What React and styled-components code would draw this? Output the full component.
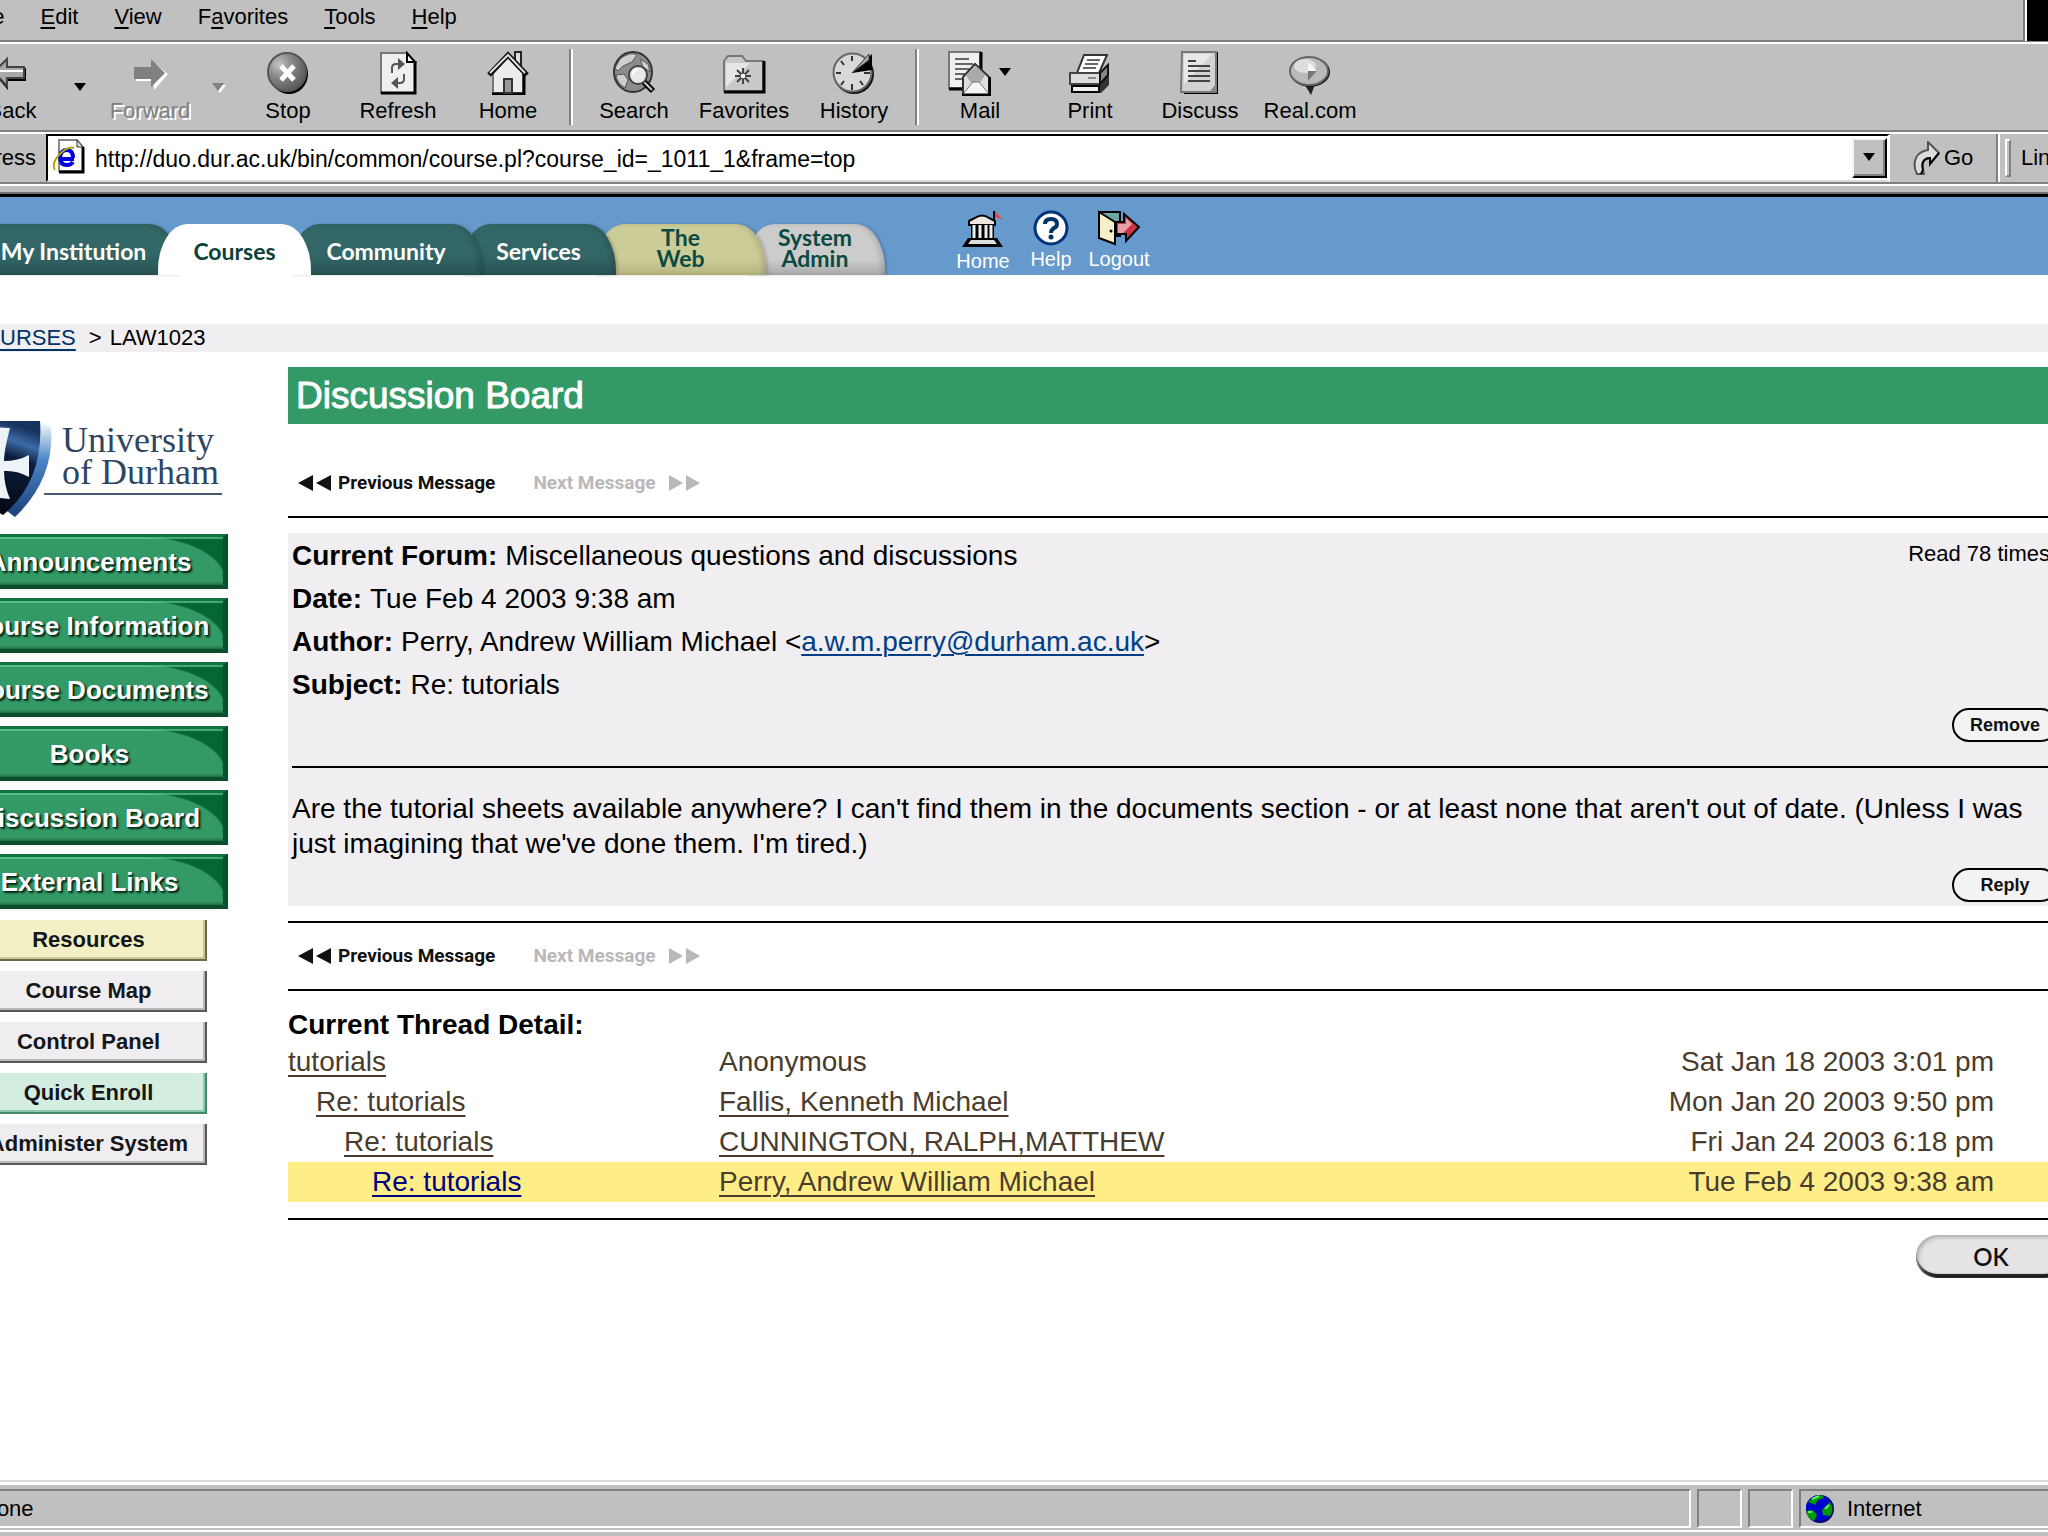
import React from "react";
import styled, { createGlobalStyle, css } from "styled-components";

const sans = `"Liberation Sans", Arial, sans-serif`;
const compact = `Roboto, "Liberation Sans", sans-serif`;
const round = `Lato, "Liberation Sans", sans-serif`;

const GlobalStyle = createGlobalStyle`
  *, *::before, *::after { box-sizing: border-box; }
  html, body { margin: 0; padding: 0; background: #fff; }
  body { font-family: ${sans}; color: #000; overflow-x: hidden; }
  button, input { font: inherit; color: inherit; margin: 0; padding: 0; border: 0; background: none; border-radius: 0; }
  button { cursor: pointer; }
  svg { display: block; flex: none; }
`;

const Browser = styled.div`
  display: flex;
  flex-direction: column;
  min-height: 100vh;
  overflow: hidden;
`;

/* ---------- browser chrome ---------- */

const Chrome = styled.header`
  background: #c0c0c0;
  font-size: 22px;
  line-height: 26px;
  border-bottom: 3px solid #000;
  box-shadow: inset 0 -2px 0 #757075;
`;

const MenuRow = styled.div`
  display: flex;
  height: 44px;
  border-bottom: 2px solid #fff;
  box-shadow: inset 0 -2px 0 #808080;
`;

const Menu = styled.nav`
  display: flex;
  flex: 1;
  gap: 36px;
  margin-left: -31px;
  padding-top: 4px;
  border-right: 2px solid #808080;
`;

const MenuItem = styled.button`
  display: block;
  height: 26px;
  u { text-underline-offset: 3px; text-decoration-thickness: 2px; }
`;

const Throbber = styled.div`
  width: 23px;
  height: 41px;
  background: #000;
  border-left: 2px solid #fff;
`;

const Toolbar = styled.div`
  display: flex;
  align-items: stretch;
  height: 90px;
  margin-left: -43px;
  border-bottom: 2px solid #fff;
  box-shadow: inset 0 -2px 0 #808080;
`;

const ToolButton = styled.button`
  display: flex;
  flex-direction: column;
  align-items: center;
  gap: 3px;
  width: 110px;
  padding-top: 7px;
  flex: none;
  ${(p) => p.$off && css`color: #808080; text-shadow: 2px 2px 0 #fff;`}
`;

const ToolIcon = styled.span`
  display: flex;
  align-items: center;
  gap: 8px;
  height: 44px;
`;

const ArrowButton = styled.button`
  display: flex;
  align-items: center;
  justify-content: center;
  width: 28px;
  flex: none;
`;

const Separator = styled.div`
  width: 4px;
  margin: 5px 6px 7px;
  border-left: 2px solid #808080;
  border-right: 2px solid #fff;
`;

const AddressRow = styled.div`
  display: flex;
  height: 48px;
`;

const AddressLabel = styled.label`
  display: flex;
  justify-content: flex-end;
  align-items: center;
  width: 46px;
  padding-right: 10px;
  flex: none;
`;

const Combo = styled.div`
  display: flex;
  align-items: stretch;
  flex: 1;
  gap: 9px;
  padding: 2px 0 2px 4px;
  background: #fff;
  border: 2px solid #000;
  border-right: 3px solid #fff;
  border-bottom-color: #dcdcdc;
`;

const AddressInput = styled.input`
  flex: 1;
  min-width: 0;
  padding-top: 2px;
  outline: 0;
  font-size: 23px;
`;

const ComboArrow = styled.button`
  display: flex;
  align-items: center;
  justify-content: center;
  width: 35px;
  background: #c0c0c0;
  border: 2px solid #f4f4f4;
  border-right-color: #000;
  border-bottom-color: #000;
  box-shadow: inset -2px -2px 0 #808080;
`;

const GoButton = styled.button`
  display: flex;
  align-items: center;
  gap: 4px;
  width: 108px;
  padding-left: 22px;
  border-right: 2px solid #808080;
`;

const LinksBar = styled.div`
  display: flex;
  align-items: center;
  gap: 10px;
  width: 50px;
  padding-left: 5px;
  border-left: 2px solid #fff;
  overflow: hidden;
`;

const Grip = styled.span`
  width: 6px;
  height: 38px;
  flex: none;
  background: #c0c0c0;
  border: 2px solid #fff;
  border-right-color: #808080;
  border-bottom-color: #808080;
`;

const ChromeFoot = styled.div`
  height: 12px;
  border-top: 2px solid #808080;
  box-shadow: inset 0 2px 0 #fff;
`;

/* ---------- site header ---------- */

const SiteHeader = styled.div`
  display: flex;
  align-items: flex-end;
  height: 78px;
  background: #6699cc;
`;

const Tabs = styled.nav`
  display: flex;
  margin-left: -32px;
  isolation: isolate;
`;

const tones = {
  teal: css`background: linear-gradient(#336666 60%, #285353); color: #fff;`,
  white: css`background: #fff; color: #0b4238;`,
  khaki: css`background: linear-gradient(#cccc99 70%, #b4b47e); color: #0b4a42;`,
  grey: css`background: linear-gradient(#cccccc 70%, #aaaaaa); color: #0b4a42;`,
};

const Tab = styled.a`
  position: relative;
  z-index: ${(p) => p.$level};
  display: flex;
  align-items: center;
  justify-content: center;
  width: ${(p) => p.$width}px;
  height: 51px;
  margin-right: -21px;
  padding-top: 4px;
  border-radius: 29px 29px 0 0 / 46px 46px 0 0;
  font: 700 23px/21px ${round};
  text-align: center;
  text-decoration: none;
  white-space: pre-line;
  ${(p) => tones[p.$tone]}
  ${(p) => p.$tone !== "white" && css`box-shadow: inset -4px 0 4px rgba(0, 0, 0, 0.12), 2px 0 3px rgba(0, 0, 0, 0.18);`}
  ${(p) => p.$double && css`padding: 0 0 3px;`}
`;

const QuickLinks = styled.nav`
  display: flex;
  align-self: stretch;
  margin-left: 85px;
`;

const QuickLink = styled.a`
  display: flex;
  flex-direction: column;
  align-items: center;
  gap: 1px;
  width: 68px;
  padding-top: 13px;
  color: #fff;
  font-size: 20px;
  line-height: 24px;
  text-decoration: none;
`;

const Crumbs = styled.nav`
  display: flex;
  gap: 8px;
  height: 28px;
  margin: 49px 0 0 -33px;
  padding-top: 1px;
  background: #f0eef0;
  font-size: 22px;
  line-height: 26px;
  a { color: #003366; margin-right: 5px; text-underline-offset: 4px; text-decoration-thickness: 2px; }
`;

/* ---------- body ---------- */

const Body = styled.div`
  display: flex;
  gap: 60px;
  margin: 0 -20px 0 -49px;
`;

const Sidebar = styled.aside`
  display: flex;
  flex-direction: column;
  align-items: center;
  width: 277px;
  flex: none;
  padding-top: 67px;
`;

const Logo = styled.div`
  display: flex;
  align-self: flex-end;
  width: 228px;
  margin-bottom: 17px;
`;

const LogoText = styled.div`
  width: 178px;
  height: 76px;
  margin-left: -12px;
  padding: 5px 0 0 18px;
  border-bottom: 2px solid #4a5a70;
  color: #2e4562;
  font: 36px/32px "Liberation Serif", "Times New Roman", serif;
  white-space: nowrap;
`;

const SideList = styled.nav`
  display: flex;
  flex-direction: column;
  gap: ${(p) => p.$gap}px;
  width: ${(p) => p.$width}px;
  margin-bottom: 11px;
`;

const CourseButton = styled.a`
  display: flex;
  align-items: center;
  justify-content: center;
  height: 55px;
  padding-top: 2px;
  background:
    radial-gradient(80px 46px at 0 46px, #339966 97%, #066634 100%) right top / 76px 100% no-repeat,
    #339966;
  border: solid;
  border-width: 3px 5px 4px 5px;
  border-color: #1a7044 #06502c #08502c #1f7a4b;
  box-shadow: inset 0 2px 0 rgba(102, 221, 153, 0.6), inset 0 -2px 2px rgba(0, 50, 25, 0.35);
  color: #fff;
  font-size: 26px;
  font-weight: 700;
  line-height: 30px;
  text-decoration: none;
  text-shadow: 2px 2px 2px #0a2c18, 1px 1px 1px #0a2c18;
  white-space: nowrap;
`;

const faces = {
  cream: ["#f2f0c4", "#6d6c45", "#c9c795"],
  grey: ["#efedf0", "#59575b", "#b9b7bb"],
  mint: ["#d3eee0", "#3f8a68", "#8cc8ab"],
};

const ToolLink = styled.a`
  display: flex;
  align-items: center;
  justify-content: center;
  height: 41px;
  background: ${(p) => faces[p.$face][0]};
  border-right: 2px solid ${(p) => faces[p.$face][1]};
  border-bottom: 2px solid ${(p) => faces[p.$face][1]};
  box-shadow: inset -2px -2px 0 ${(p) => faces[p.$face][2]};
  color: #14161a;
  font-size: 22px;
  font-weight: 700;
  line-height: 26px;
  text-decoration: none;
  white-space: nowrap;
`;

const Main = styled.main`
  flex: 1;
  min-width: 0;
  padding-top: 15px;
  font-size: 28px;
  line-height: 35px;
`;

const Title = styled.h1`
  margin: 0 0 26px;
  padding-left: 8px;
  background: #339966;
  color: #fff;
  font-size: 37px;
  font-weight: 400;
  line-height: 57px;
  -webkit-text-stroke: 1px #fff;
`;

const Rule = styled.hr`
  height: 2px;
  margin: 0;
  border: 0;
  background: #000;
`;

const Pager = styled.div`
  display: flex;
  align-items: center;
  gap: 38px;
  height: 66px;
  padding-left: 10px;
`;

const PagerButton = styled.button`
  display: flex;
  align-items: center;
  gap: ${(p) => (p.disabled ? 12 : 6)}px;
  color: ${(p) => (p.disabled ? "#b9b7ba" : "#111")};
  font: 700 19px/24px ${compact};
`;

const Post = styled.article`
  margin: 15px 0;
  padding: 1px 10px 4px 4px;
  background: #f0eef0;
`;

const PostHead = styled.div`
  display: flex;
  justify-content: space-between;
`;

const Facts = styled.dl`
  margin: 0;
  line-height: 43px;
`;

const Fact = styled.div`
  display: flex;
  gap: 8px;
  dt { font-weight: 700; }
  dd { margin: 0; }
  a { color: #003f87; text-underline-offset: 3px; text-decoration-thickness: 2px; }
`;

const ReadCount = styled.span`
  padding-right: 8px;
  font-size: 22px;
  line-height: 40px;
  white-space: nowrap;
`;

const Actions = styled.div`
  display: flex;
  justify-content: flex-end;
  padding: ${(p) => (p.$loose ? "2px 0 24px" : "7px 0 0")};
`;

const PillButton = styled.button`
  width: 106px;
  height: 34px;
  border: 2px solid #000;
  border-radius: 17px;
  background: #f4f3f4;
  color: #111;
  font-size: 18px;
  font-weight: 700;
  line-height: 28px;
`;

const Message = styled.p`
  max-width: 1740px;
  margin: 0;
  padding-top: 23px;
`;

const ThreadTitle = styled.h2`
  margin: 0;
  padding-top: 16px;
  font-size: 28px;
  line-height: 35px;
`;

const Thread = styled.table`
  width: 100%;
  margin-bottom: 16px;
  border-collapse: collapse;
  color: #4a3c2c;
  line-height: 40px;
  td { padding: 0; }
  a { color: inherit; text-underline-offset: 4px; text-decoration-thickness: 2px; }
`;

const ThreadRow = styled.tr`
  height: 40px;
  background: ${(p) => (p.$current ? "#ffee88" : "transparent")};
`;

const TopicCell = styled.td`
  width: 431px;
  a { margin-left: ${(p) => p.$depth * 28}px; color: ${(p) => (p.$current ? "#000080" : "inherit")}; }
`;

const DateCell = styled.td`
  text-align: right;
  && { padding-right: 74px; }
`;

const OkRow = styled.div`
  display: flex;
  justify-content: flex-end;
  padding: 15px 2px 40px 0;
`;

const OkButton = styled.button`
  width: 150px;
  height: 43px;
  border-radius: 22px;
  background: #e6e3e7;
  box-shadow: inset 2px 2px 4px #aaa8ac, inset 0 -4px 1px #1a1a1a;
  color: #111;
  font: 600 24px/38px ${round};
`;

/* ---------- status bar ---------- */

const StatusBar = styled.footer`
  display: flex;
  gap: 6px;
  height: 56px;
  margin-top: auto;
  padding: 4px 0 4px;
  background: #c0c0c0;
  border-top: 2px solid #dcdcdc;
  box-shadow: inset 0 3px 0 #fff, inset 0 -4px 0 #c0c0c0, inset 0 -6px 0 #fff;
  font-size: 22px;
  line-height: 26px;
`;

const StatusCell = styled.div`
  display: flex;
  align-items: center;
  gap: 12px;
  height: 39px;
  margin-top: 3px;
  ${(p) => (p.$width ? css`width: ${p.$width}px; flex: none;` : css`flex: 1; margin-left: -25px;`)}
  padding-left: 4px;
  border: 2px solid #fff;
  border-top-color: #808080;
  border-left-color: #808080;
  ${(p) => p.$open && css`border-right: 0;`}
`;

/* ---------- drawings ---------- */

const Down = ({ off, size = 12 }) => (
  <svg width={size + 2} height="10" viewBox="0 0 14 10" aria-hidden="true">
    {off && <path d="M2 2h12l-6 8z" fill="#fff" />}
    <path d="M0 0h12l-6 8z" fill={off ? "#808080" : "#000"} />
  </svg>
);

const BackIcon = () => (
  <svg width="40" height="44" viewBox="0 0 40 44">
    <path d="M2 23 16 8v9h18v13H16v9z" fill="#000" />
    <path d="M2 21 15 8v8h17v11H15v8z" fill="#a8a8a8" stroke="#444" strokeWidth="2" />
    <path d="M7 20h24" stroke="#fff" strokeWidth="2" />
  </svg>
);
const ForwardIcon = () => (
  <svg width="36" height="44" viewBox="0 0 36 44">
    <path d="M4 18h16V10l16 13-14 16v-9H4z" fill="#fff" />
    <path d="M2 16h17V8l14 14-14 14v-8H2z" fill="#808080" />
  </svg>
);
const StopIcon = () => (
  <svg width="42" height="44" viewBox="0 0 42 44">
    <defs>
      <radialGradient id="stop" cx=".3" cy=".3" r=".8">
        <stop offset="0" stopColor="#c4c4c4" /><stop offset=".45" stopColor="#858585" /><stop offset="1" stopColor="#555" />
      </radialGradient>
    </defs>
    <ellipse cx="22" cy="23" rx="19" ry="20" fill="#000" />
    <ellipse cx="20" cy="21" rx="19" ry="19" fill="url(#stop)" stroke="#555" strokeWidth="2" />
    <path d="M14 15l13 14M27 15 14 29" stroke="#fff" strokeWidth="5" />
  </svg>
);
const RefreshIcon = () => (
  <svg width="38" height="44" viewBox="0 0 38 44">
    <path d="M2 2h26l8 9v31H2z" fill="#efefef" stroke="#777" strokeWidth="2" />
    <path d="M36 10v32H2" fill="none" stroke="#000" strokeWidth="3" />
    <path d="M28 2v9h8z" fill="#fff" stroke="#000" strokeWidth="2" />
    <path d="M13 22v-5q0-4 4-4h3" fill="none" stroke="#555" strokeWidth="2" />
    <path d="M19 7l7 6-7 6z" fill="#555" />
    <path d="M25 23v5q0 4-4 4h-3" fill="none" stroke="#555" strokeWidth="2" />
    <path d="M19 26l-7 6 7 6z" fill="#555" />
  </svg>
);
const HomeIcon = () => (
  <svg width="42" height="44" viewBox="0 0 42 44">
    <path d="M28 10V1h6v17z" fill="#ddd" stroke="#222" strokeWidth="2" />
    <path d="M6 22 21 6l15 16v20H6z" fill="#ececec" stroke="#777" strokeWidth="2" />
    <path d="M37 22v21H5" fill="none" stroke="#000" strokeWidth="3" />
    <path d="M2 24 21 4l19 20" fill="none" stroke="#111" strokeWidth="5" />
    <path d="M3 22 21 4l17 18" fill="none" stroke="#ddd" strokeWidth="2" />
    <path d="M17 42V28h8v14z" fill="#999" stroke="#333" strokeWidth="2" />
  </svg>
);
const SearchIcon = () => (
  <svg width="44" height="44" viewBox="0 0 44 44">
    <ellipse cx="21" cy="21" rx="19" ry="20" fill="#8c8c8c" stroke="#333" strokeWidth="2" />
    <path d="M8 8q10-8 17-4l-5 7-9 4-5 5-3-3zM28 8l8 5 2 8-7-5zM4 24l8-1 4 6-3 8q-8-5-9-13z" fill="#cfcfcf" stroke="#555" strokeWidth="1" />
    <path d="M32 31l9 9" stroke="#000" strokeWidth="6" />
    <path d="M32 31l8 8" stroke="#ccc" strokeWidth="2" />
    <circle cx="26" cy="24" r="9" fill="#e9e9e9" stroke="#444" strokeWidth="2" />
    <path d="M21 24q0-5 5-5" fill="none" stroke="#fff" strokeWidth="2" />
  </svg>
);
const FavoritesIcon = () => (
  <svg width="44" height="44" viewBox="0 0 44 44">
    <path d="M2 10 6 5h14l4 5h17v30H2z" fill="#c9c9c9" stroke="#777" strokeWidth="2" />
    <path d="M4 12h24L4 36z" fill="#e6e6e6" />
    <path d="M42 10v31H2" fill="none" stroke="#000" strokeWidth="3" />
    <path d="M21 17v16M13 25h16M15 19l12 12M27 19 15 31" stroke="#444" strokeWidth="2" />
    <circle cx="21" cy="25" r="3" fill="#eee" stroke="#333" />
  </svg>
);
const HistoryIcon = () => (
  <svg width="44" height="44" viewBox="0 0 44 44">
    <ellipse cx="22" cy="23" rx="20" ry="20" fill="#111" />
    <ellipse cx="20.500" cy="21.500" rx="19" ry="19" fill="#d8d8d8" stroke="#666" strokeWidth="2" />
    <path d="M20 5v5M20 33v6M4 22h5M32 22h6M9 10l3 4M31 34l-3-4M9 34l3-4" stroke="#333" strokeWidth="2" />
    <path d="M20 22 40 3v16z" fill="#000" />
    <path d="M20 22 37 3v6z" fill="#aaa" stroke="#333" />
  </svg>
);
const MailIcon = () => (
  <svg width="44" height="46" viewBox="0 0 44 46">
    <path d="M2 2h31v36H2z" fill="#f0f0f0" stroke="#777" strokeWidth="2" />
    <path d="M34 2v37H2" fill="none" stroke="#000" strokeWidth="3" />
    <path d="M8 9h14M8 14h18M8 19h14M8 24h10M8 29h8" stroke="#666" strokeWidth="2" />
    <path d="M16 27 28 14l14 13v17H16z" fill="#ddd" stroke="#333" strokeWidth="2" />
    <path d="M19 25l10-9 9 9-5 8h-9z" fill="#aaa" />
    <path d="M16 44l10-12h6l10 12" fill="#f5f5f5" stroke="#777" />
    <path d="M43 27v18H15" fill="none" stroke="#000" strokeWidth="3" />
  </svg>
);
const PrintIcon = () => (
  <svg width="44" height="44" viewBox="0 0 44 44">
    <path d="M32 22l9-8v20l-8 8H5V22z" fill="#333" />
    <path d="M16 4h23l-8 18H9z" fill="#fff" stroke="#333" strokeWidth="2" />
    <path d="M19 9h13M17 13h13M15 17h13" stroke="#666" strokeWidth="2" />
    <path d="M2 22h30v11H2z" fill="#ddd" stroke="#444" strokeWidth="2" />
    <path d="M32 22l8-8v10l-8 9z" fill="#888" stroke="#111" strokeWidth="2" />
    <path d="M4 35h27v6H4z" fill="#eee" stroke="#000" strokeWidth="2" />
    <path d="M20 27h8" stroke="#888" strokeWidth="2" />
  </svg>
);
const DiscussIcon = () => (
  <svg width="42" height="46" viewBox="0 0 42 46">
    <path d="M5 2h34v42H5z" fill="#000" />
    <path d="M3 2h34v40H2z" fill="#d2d2d2" stroke="#777" strokeWidth="2" />
    <path d="M5 4h28L5 34z" fill="#e8e8e8" />
    <path d="M9 11h8M9 16h22M9 21h22M9 26h22M9 31h22" stroke="#444" strokeWidth="2" />
    <path d="M31 41l6-7v7z" fill="#888" />
  </svg>
);
const RealIcon = () => (
  <svg width="44" height="44" viewBox="0 0 44 44">
    <path d="M15 31h13l-5 13z" fill="#222" />
    <ellipse cx="22" cy="21" rx="20" ry="15" fill="#111" />
    <ellipse cx="21" cy="20" rx="19" ry="14" fill="#b9b9b9" stroke="#666" strokeWidth="2" />
    <ellipse cx="17" cy="15" rx="11" ry="7" fill="#dedede" />
    <path d="M20 11l9 9-9 10z" fill="#f5f5f5" />
    <path d="M20 20h9l-9 10z" fill="#777" />
  </svg>
);
const PageIcon = () => (
  <svg width="34" height="36" viewBox="0 0 34 36">
    <path d="M7 2h18l6 7v24H7z" fill="#fff" stroke="#888" strokeWidth="2" />
    <path d="M31 9v25H7" fill="none" stroke="#000" strokeWidth="3" />
    <path d="M25 2v7h6z" fill="#ddd" stroke="#333" />
    <path d="M22 21H9M8 19q1-7 7-7 6 0 6 8M8 19q0 8 7 8 4 0 6-3" fill="none" stroke="#0000dd" strokeWidth="4" />
    <path d="M3 32Q-1 25 8 16 16 8 22 10" fill="none" stroke="#b8a800" strokeWidth="2" />
  </svg>
);
const GoIcon = () => (
  <svg width="28" height="34" viewBox="0 0 28 34">
    <path d="M16 1l11 11-9 11v-6q-9 0-7 12l1 4H5q-5-10 0-18 4-5 11-6z" fill="#ddd" stroke="#555" strokeWidth="2" />
    <path d="M27 12l-9 11v-6q-10 1-7 12l-2 4" fill="none" stroke="#000" strokeWidth="2" />
  </svg>
);
const BankIcon = () => (
  <svg width="42" height="38" viewBox="0 0 42 38">
    <path d="M0 37 6 28h29l6 9z" fill="#000" />
    <path d="M6 34l3-4h23l3 4z" fill="#ddd" />
    <path d="M7 11l6-3q7-5 14 0l6 3v4H7z" fill="#ece6e0" stroke="#000" strokeWidth="2" />
    <path d="M9 15h23v14H9z" fill="#000" />
    <path d="M12 15v13M18 15v13M24 15v13M29 15v13" stroke="#eee" strokeWidth="3" />
    <path d="M32 1v10" stroke="#000" strokeWidth="2" />
    <path d="M33 1l8 9-8-3z" fill="#e04858" />
  </svg>
);
const DoorIcon = () => (
  <svg width="44" height="36" viewBox="0 0 44 36">
    <path d="M2 2h21v24H2z" fill="#6fa6a6" stroke="#000" strokeWidth="2" />
    <path d="M19 12h8V4l15 13-13 14v-7H19z" fill="#cc3344" stroke="#000" strokeWidth="2" />
    <path d="M21 14h8V8l6 6-9 9h-5z" fill="#e8a0a6" />
    <path d="M2 2l16 10v22L2 28z" fill="#f4efc6" stroke="#000" strokeWidth="2" />
    <circle cx="14" cy="21" r="1.500" fill="#000" />
  </svg>
);
const HelpIcon = () => (
  <svg width="36" height="36" viewBox="0 0 36 36">
    <circle cx="18" cy="18" r="16" fill="#fff" stroke="#003377" strokeWidth="3" />
    <path d="M12 14q0-5 6-5t6 5q0 3-3 4-3 2-3 5" fill="none" stroke="#003366" strokeWidth="4" />
    <circle cx="18" cy="27" r="2.500" fill="#003366" />
  </svg>
);
const Shield = () => (
  <svg width="56" height="98" viewBox="0 0 56 98">
    <defs>
      <linearGradient id="rim" x1="0" y1="0" x2="0" y2="1">
        <stop offset="0" stopColor="#fff" /><stop offset=".4" stopColor="#4b86c8" /><stop offset="1" stopColor="#1c3f78" />
      </linearGradient>
      <linearGradient id="field" x1="0" y1="0" x2="0" y2="98" gradientUnits="userSpaceOnUse" gradientTransform="rotate(20)">
        <stop offset="0" stopColor="#16335e" /><stop offset=".16" stopColor="#3c6ba5" /><stop offset=".32" stopColor="#0c1d3c" /><stop offset="1" stopColor="#02050c" />
      </linearGradient>
    </defs>
    <path d="M38 2 51 8q4 52-36 90l-8-6z" fill="url(#rim)" />
    <path d="M-50 2h90q4 60-37 94-50-30-53-94z" fill="url(#field)" />
    <path d="M-8 8 10 9Q4 32 4 42q14 0 25-6v22q-12-7-25-6 0 14 6 28l-18-2z" fill="#eef3f8" />
  </svg>
);
const Globe = () => (
  <svg width="30" height="30" viewBox="0 0 30 30">
    <circle cx="15" cy="15" r="14" fill="#000066" />
    <circle cx="14" cy="14" r="13" fill="#0000cc" />
    <path d="M3 8q6-7 14-7l2 3-6 2-3 5-4-2zM17 16l8-8q5 8 0 14l-7-1zM1 17l7-1 4 5-3 6q-7-3-8-10z" fill="#009900" />
    <path d="M7 5l7-3M20 15l4-4M3 18h4" stroke="#66ee66" strokeWidth="2" />
  </svg>
);
const Triangles = ({ flip }) => (
  <svg width="34" height="18" viewBox="0 0 34 18" aria-hidden="true">
    {flip ? <path d="M1 1v16l14-8zM18 1v16l14-8z" fill="currentColor" /> : <path d="M15 1v16L0 9zM33 1v16L18 9z" fill="currentColor" />}
  </svg>
);

/* ---------- data ---------- */

const menus = ["Edit", "View", "Favorites", "Tools", "Help"];
const menuKeys = { Favorites: 1 };

const tabs = [
  ["My Institution", 211, "teal", 6],
  ["Courses", 153, "white", 9],
  ["Community", 192, "teal", 5],
  ["Services", 155, "teal", 4],
  ["The\nWeb", 171, "khaki", 3],
  ["System\nAdmin", 140, "grey", 2],
];

const courseAreas = ["Announcements", "Course Information", "Course Documents", "Books", "Discussion Board", "External Links"];
const courseTools = [
  ["Resources", "cream"],
  ["Course Map", "grey"],
  ["Control Panel", "grey"],
  ["Quick Enroll", "mint"],
  ["Administer System", "grey"],
];

const thread = [
  ["tutorials", "Anonymous", "Sat Jan 18 2003 3:01 pm"],
  ["Re: tutorials", "Fallis, Kenneth Michael", "Mon Jan 20 2003 9:50 pm"],
  ["Re: tutorials", "CUNNINGTON, RALPH,MATTHEW", "Fri Jan 24 2003 6:18 pm"],
  ["Re: tutorials", "Perry, Andrew William Michael", "Tue Feb 4 2003 9:38 am"],
];

const Tool = ({ icon, label, off, menu }) => (
  <ToolButton type="button" disabled={off} $off={off}>
    <ToolIcon>{icon}{menu && <Down />}</ToolIcon>
    {label}
  </ToolButton>
);

const MessagePager = () => (
  <Pager>
    <PagerButton type="button"><Triangles />Previous Message</PagerButton>
    <PagerButton type="button" disabled>Next Message<Triangles flip /></PagerButton>
  </Pager>
);

export default function App() {
  return (
    <Browser>
      <GlobalStyle />
      <Chrome>
        <MenuRow>
          <Menu>
            <MenuItem type="button">File</MenuItem>
            {menus.map((m) => {
              const k = menuKeys[m] || 0;
              return (
                <MenuItem type="button" key={m}>
                  {m.slice(0, k)}<u>{m[k]}</u>{m.slice(k + 1)}
                </MenuItem>
              );
            })}
          </Menu>
          <Throbber />
        </MenuRow>
        <Toolbar>
          <Tool icon={<BackIcon />} label="Back" />
          <ArrowButton type="button" aria-label="Back history"><Down /></ArrowButton>
          <Tool icon={<ForwardIcon />} label="Forward" off />
          <ArrowButton type="button" aria-label="Forward history"><Down off /></ArrowButton>
          <Tool icon={<StopIcon />} label="Stop" />
          <Tool icon={<RefreshIcon />} label="Refresh" />
          <Tool icon={<HomeIcon />} label="Home" />
          <Separator />
          <Tool icon={<SearchIcon />} label="Search" />
          <Tool icon={<FavoritesIcon />} label="Favorites" />
          <Tool icon={<HistoryIcon />} label="History" />
          <Separator />
          <Tool icon={<MailIcon />} label="Mail" menu />
          <Tool icon={<PrintIcon />} label="Print" />
          <Tool icon={<DiscussIcon />} label="Discuss" />
          <Tool icon={<RealIcon />} label="Real.com" />
        </Toolbar>
        <AddressRow>
          <AddressLabel htmlFor="address">Address</AddressLabel>
          <Combo>
            <PageIcon />
            <AddressInput id="address" type="text" defaultValue="http://duo.dur.ac.uk/bin/common/course.pl?course_id=_1011_1&frame=top" />
            <ComboArrow type="button" aria-label="Show addresses"><Down size={14} /></ComboArrow>
          </Combo>
          <GoButton type="button"><GoIcon />Go</GoButton>
          <LinksBar><Grip />Links</LinksBar>
        </AddressRow>
        <ChromeFoot />
      </Chrome>

      <SiteHeader>
        <Tabs>
          {tabs.map(([label, width, tone, level]) => (
            <Tab href="#" key={label} $width={width} $tone={tone} $level={level} $double={label.includes("\n")}>{label}</Tab>
          ))}
        </Tabs>
        <QuickLinks>
          <QuickLink href="#"><BankIcon />Home</QuickLink>
          <QuickLink href="#"><HelpIcon />Help</QuickLink>
          <QuickLink href="#"><DoorIcon />Logout</QuickLink>
        </QuickLinks>
      </SiteHeader>

      <Crumbs>
        <a href="#">COURSES</a>
        <span>&gt;</span>
        <span>LAW1023</span>
      </Crumbs>

      <Body>
        <Sidebar>
          <Logo>
            <Shield />
            <LogoText>University<br />of Durham</LogoText>
          </Logo>
          <SideList $gap={9} $width={277}>
            {courseAreas.map((a) => <CourseButton href="#" key={a}>{a}</CourseButton>)}
          </SideList>
          <SideList $gap={10} $width={235}>
            {courseTools.map(([t, face]) => <ToolLink href="#" key={t} $face={face}>{t}</ToolLink>)}
          </SideList>
        </Sidebar>

        <Main>
          <Title>Discussion Board</Title>
          <MessagePager />
          <Rule />
          <Post>
            <PostHead>
              <Facts>
                <Fact><dt>Current Forum:</dt><dd>Miscellaneous questions and discussions</dd></Fact>
                <Fact><dt>Date:</dt><dd>Tue Feb 4 2003 9:38 am</dd></Fact>
                <Fact><dt>Author:</dt><dd>Perry, Andrew William Michael &lt;<a href="mailto:a.w.m.perry@durham.ac.uk">a.w.m.perry@durham.ac.uk</a>&gt;</dd></Fact>
                <Fact><dt>Subject:</dt><dd>Re: tutorials</dd></Fact>
              </Facts>
              <ReadCount>Read 78 times</ReadCount>
            </PostHead>
            <Actions $loose><PillButton type="button">Remove</PillButton></Actions>
            <Rule />
            <Message>
              Are the tutorial sheets available anywhere? I can't find them in the documents section - or at least none that aren't out of date. (Unless I was just imagining that we've done them. I'm tired.)
            </Message>
            <Actions><PillButton type="button">Reply</PillButton></Actions>
          </Post>
          <Rule />
          <MessagePager />
          <Rule />
          <ThreadTitle>Current Thread Detail:</ThreadTitle>
          <Thread>
            <tbody>
              {thread.map(([topic, author, date], i) => {
                const current = i === thread.length - 1;
                return (
                  <ThreadRow key={date} $current={current}>
                    <TopicCell $depth={i} $current={current}><a href="#">{topic}</a></TopicCell>
                    <td>{i === 0 ? author : <a href="#">{author}</a>}</td>
                    <DateCell>{date}</DateCell>
                  </ThreadRow>
                );
              })}
            </tbody>
          </Thread>
          <Rule />
          <OkRow><OkButton type="button">OK</OkButton></OkRow>
        </Main>
      </Body>

      <StatusBar>
        <StatusCell>Done</StatusCell>
        <StatusCell $width={45} />
        <StatusCell $width={45} />
        <StatusCell $width={249} $open><Globe />Internet</StatusCell>
      </StatusBar>
    </Browser>
  );
}
